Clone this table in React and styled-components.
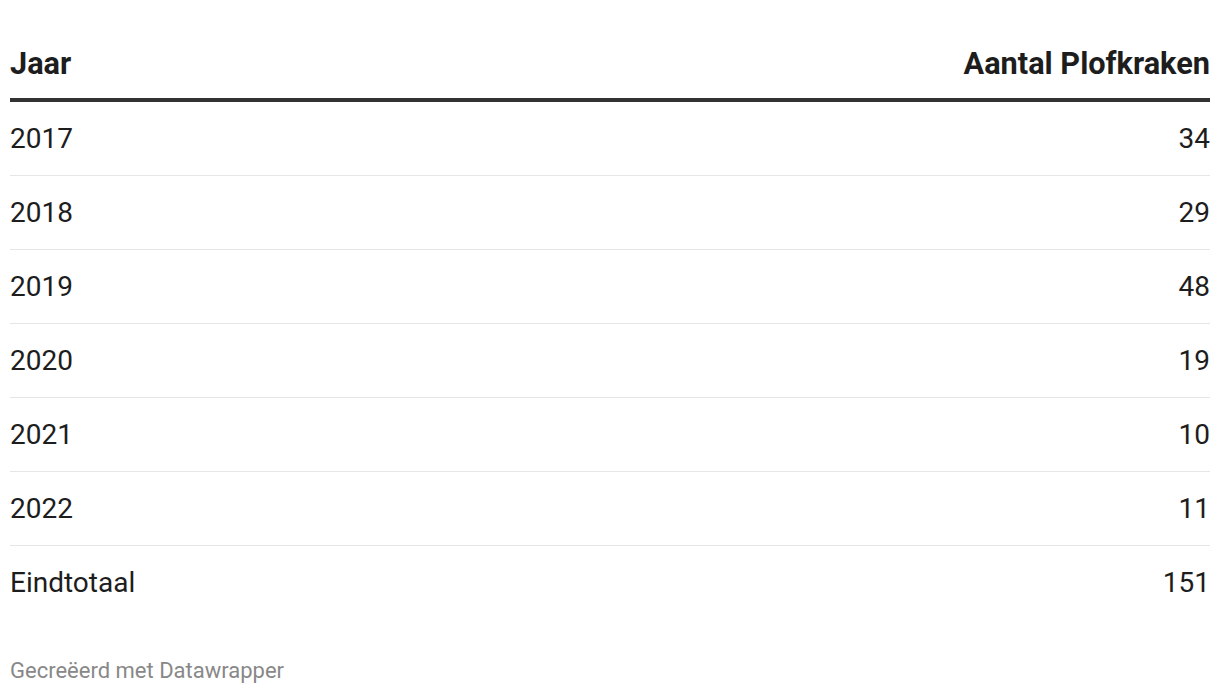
import React from 'react';
import styled, { createGlobalStyle } from 'styled-components';

const GlobalStyle = createGlobalStyle`
    body {
        margin: 0;
        background: #fff;
        font-family: Roboto, "Liberation Sans", sans-serif;
        color: #1d1d1d;
    }
`;

const Wrapper = styled.div`
    padding: 0 10px;
`;

const Table = styled.table`
    width: 100%;
    border-collapse: collapse;
    font-size: 28px;
`;

const HeadCell = styled.th`
    font-size: 30.7px;
    font-weight: 700;
    text-align: ${p => p.$right ? 'right' : 'left'};
    padding: 47px 0 17px;
    line-height: 34px;
    border-bottom: 4px solid #333;
`;

const Cell = styled.td`
    height: 73px;
    padding: 0;
    line-height: 34px;
    vertical-align: middle;
    text-align: ${p => p.$right ? 'right' : 'left'};
    border-bottom: ${p => p.$last ? 'none' : '1px solid #e6e6e6'};
`;

const Footer = styled.div`
    margin-top: 39px;
    font-size: 22px;
    line-height: 26px;
    color: #888;
`;

const rows = [
    ['2017', '34'],
    ['2018', '29'],
    ['2019', '48'],
    ['2020', '19'],
    ['2021', '10'],
    ['2022', '11'],
    ['Eindtotaal', '151'],
];

export default function App() {
    return (
        <Wrapper>
            <GlobalStyle />
            <Table>
                <thead>
                    <tr>
                        <HeadCell>Jaar</HeadCell>
                        <HeadCell $right>Aantal Plofkraken</HeadCell>
                    </tr>
                </thead>
                <tbody>
                    {rows.map(([year, count], i) => {
                        const last = i === rows.length - 1;
                        return (
                            <tr key={year}>
                                <Cell $last={last}>{year}</Cell>
                                <Cell $right $last={last}>{count}</Cell>
                            </tr>
                        );
                    })}
                </tbody>
            </Table>
            <Footer>Gecreëerd met Datawrapper</Footer>
        </Wrapper>
    );
}
